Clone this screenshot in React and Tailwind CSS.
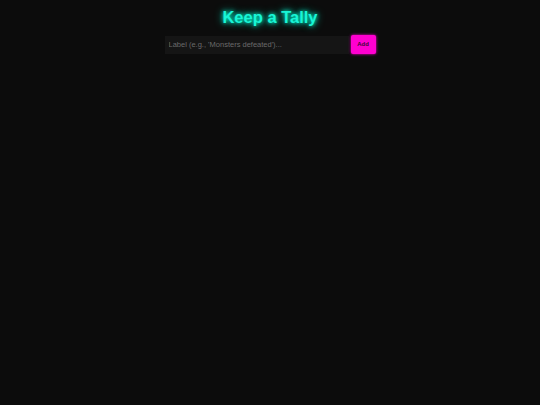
import React, { useState } from 'react';

const App = () => {
  const [label, setLabel] = useState('');

  return (
    <div
      className="min-h-[405px] w-full bg-[#0c0c0c] flex flex-col items-center"
      style={{ fontFamily: '"Liberation Sans", Arial, sans-serif' }}
    >
      <h1 className="mt-[7px] text-[16.5px] leading-[20px] font-bold text-[#19f5d6] [text-shadow:0_0_4px_#00ffd5,0_0_8px_#00c8aa]">
        Keep a Tally
      </h1>

      <div className="mt-[8px] flex items-center gap-[2px]">
        <input
          value={label}
          onChange={(e) => setLabel(e.target.value)}
          placeholder="Label (e.g., 'Monsters defeated')..."
          className="w-[184px] h-[18px] px-[4px] bg-[#151515] text-[7.5px] text-gray-300 placeholder:text-[#6a6a6a] outline-none"
        />
        <button className="w-[25px] h-[19px] rounded-[2px] bg-[#ff00d0] text-[6px] font-bold text-[#3a0a33] [box-shadow:0_0_3px_#ff00d0]">
          Add
        </button>
      </div>
    </div>
  );
};

export default App;
